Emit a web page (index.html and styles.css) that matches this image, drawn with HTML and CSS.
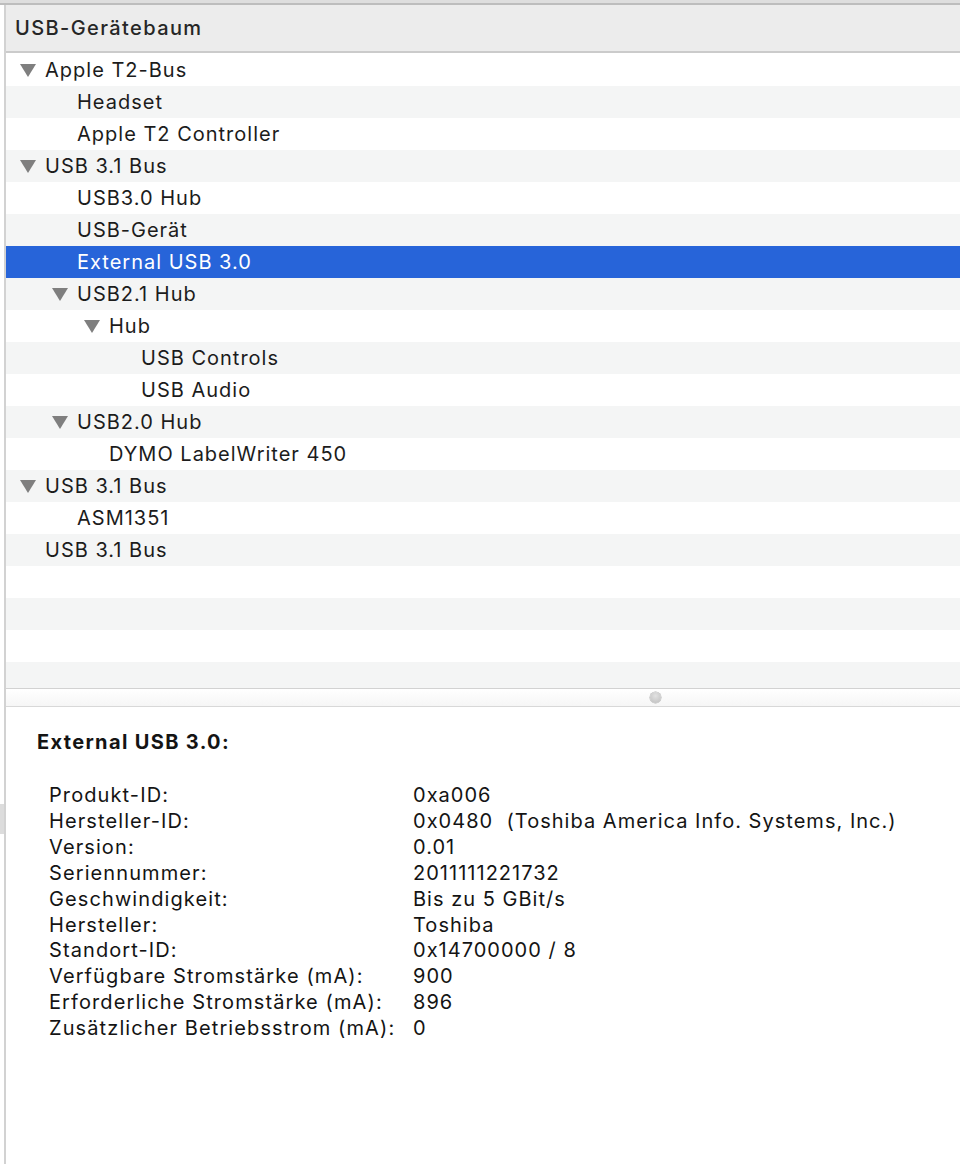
FILE: index.html
```html
<!DOCTYPE html>
<html lang="de">
<head>
<meta charset="utf-8">
<title>USB-Gerätebaum</title>
<link rel="stylesheet" href="styles.css">
</head>
<body>
<div class="topbar"></div>
<div class="main">
  <div class="gutter"><div class="gutter-block"></div></div>
  <div class="panel">
    <div class="header">USB-Gerätebaum</div>
    <div class="tree">
      <div class="row l0"><span class="tri"></span>Apple T2-Bus</div>
      <div class="row l1 alt">Headset</div>
      <div class="row l1">Apple T2 Controller</div>
      <div class="row l0 alt"><span class="tri"></span>USB 3.1 Bus</div>
      <div class="row l1">USB3.0 Hub</div>
      <div class="row l1 alt">USB-Gerät</div>
      <div class="row l1 sel">External USB 3.0</div>
      <div class="row l1 alt"><span class="tri"></span>USB2.1 Hub</div>
      <div class="row l2"><span class="tri"></span>Hub</div>
      <div class="row l3 alt">USB Controls</div>
      <div class="row l3">USB Audio</div>
      <div class="row l1 alt"><span class="tri"></span>USB2.0 Hub</div>
      <div class="row l2">DYMO LabelWriter 450</div>
      <div class="row l0 alt"><span class="tri"></span>USB 3.1 Bus</div>
      <div class="row l1">ASM1351</div>
      <div class="row l0 alt">USB 3.1 Bus</div>
      <div class="row"></div>
      <div class="row alt"></div>
      <div class="row"></div>
      <div class="row alt"></div>
    </div>
    <div class="splitter"><span class="knob"></span></div>
    <div class="details">
      <div class="title">External USB 3.0:</div>
      <div class="props">
        <div class="k">Produkt-ID:</div><div class="v">0xa006</div>
        <div class="k">Hersteller-ID:</div><div class="v">0x0480&nbsp; (Toshiba America Info. Systems, Inc.)</div>
        <div class="k">Version:</div><div class="v">0.01</div>
        <div class="k">Seriennummer:</div><div class="v">2011111221732</div>
        <div class="k">Geschwindigkeit:</div><div class="v">Bis zu 5 GBit/s</div>
        <div class="k">Hersteller:</div><div class="v">Toshiba</div>
        <div class="k">Standort-ID:</div><div class="v">0x14700000 / 8</div>
        <div class="k">Verfügbare Stromstärke (mA):</div><div class="v">900</div>
        <div class="k">Erforderliche Stromstärke (mA):</div><div class="v">896</div>
        <div class="k">Zusätzlicher Betriebsstrom (mA):</div><div class="v">0</div>
      </div>
    </div>
  </div>
</div>
</body>
</html>
```
FILE: styles.css
```css
html, body {
  margin: 0;
  padding: 0;
  background: #ffffff;
}
body {
  font-family: Inter, "Liberation Sans", sans-serif;
  color: #1c1c1c;
  font-size: 20px;
  letter-spacing: 1px;
  width: 960px;
  height: 1164px;
  overflow: hidden;
}
.topbar {
  height: 3px;
  background: #dedede;
  border-bottom: 2px solid #bdbdbd;
}
.main {
  display: flex;
  height: 1159px;
}
.gutter {
  width: 4px;
  padding-top: 799px;
  box-sizing: border-box;
}
.gutter-block {
  height: 30px;
  background: #dcdcdc;
}
.panel {
  flex: 1;
  border-left: 2px solid #d2d2d2;
  display: flex;
  flex-direction: column;
  min-width: 0;
}
.header {
  height: 46px;
  background: #ececec;
  border-bottom: 2px solid #cbcbcb;
  display: flex;
  align-items: center;
  padding-left: 9px;
  font-weight: 500;
  letter-spacing: 1.4px;
  color: #262626;
  margin-bottom: 1px;
}
.tree {
  height: 634px;
  overflow: hidden;
}
.row {
  height: 32px;
  display: flex;
  align-items: center;
  background: #ffffff;
  white-space: nowrap;
  box-sizing: border-box;
}
.row.alt { background: #f4f5f5; }
.row.sel { background: #2764d9; color: #ffffff; }
.row.l0 { padding-left: 39px; }
.row.l1 { padding-left: 71px; }
.row.l2 { padding-left: 103px; }
.row.l3 { padding-left: 135px; }
.tri {
  width: 0;
  height: 0;
  border-left: 8px solid transparent;
  border-right: 8px solid transparent;
  border-top: 13px solid #7f7f7f;
  margin-left: -25px;
  margin-right: 9px;
  margin-top: 1px;
}
.splitter {
  height: 17px;
  border-top: 1px solid #d2d2d2;
  border-bottom: 1px solid #d8d8d8;
  background: linear-gradient(#ffffff, #f6f6f6);
  display: flex;
  align-items: center;
  padding-left: 644px;
}
.knob {
  width: 11px;
  height: 11px;
  border-radius: 50%;
  background: radial-gradient(circle at 50% 35%, #e2e2e2, #bdbdbd);
  box-shadow: 0 0 0 0.5px #b0b0b0;
}
.details {
  padding: 22px 0 0 31px;
  color: #141414;
}
.title {
  font-weight: 700;
  letter-spacing: 1.35px;
  line-height: 26px;
  margin-bottom: 28px;
}
.props {
  display: grid;
  grid-template-columns: 364px auto;
  padding-left: 12px;
  line-height: 25.9px;
  letter-spacing: 1.1px;
}
.v { white-space: pre; letter-spacing: 1.02px; }
```
